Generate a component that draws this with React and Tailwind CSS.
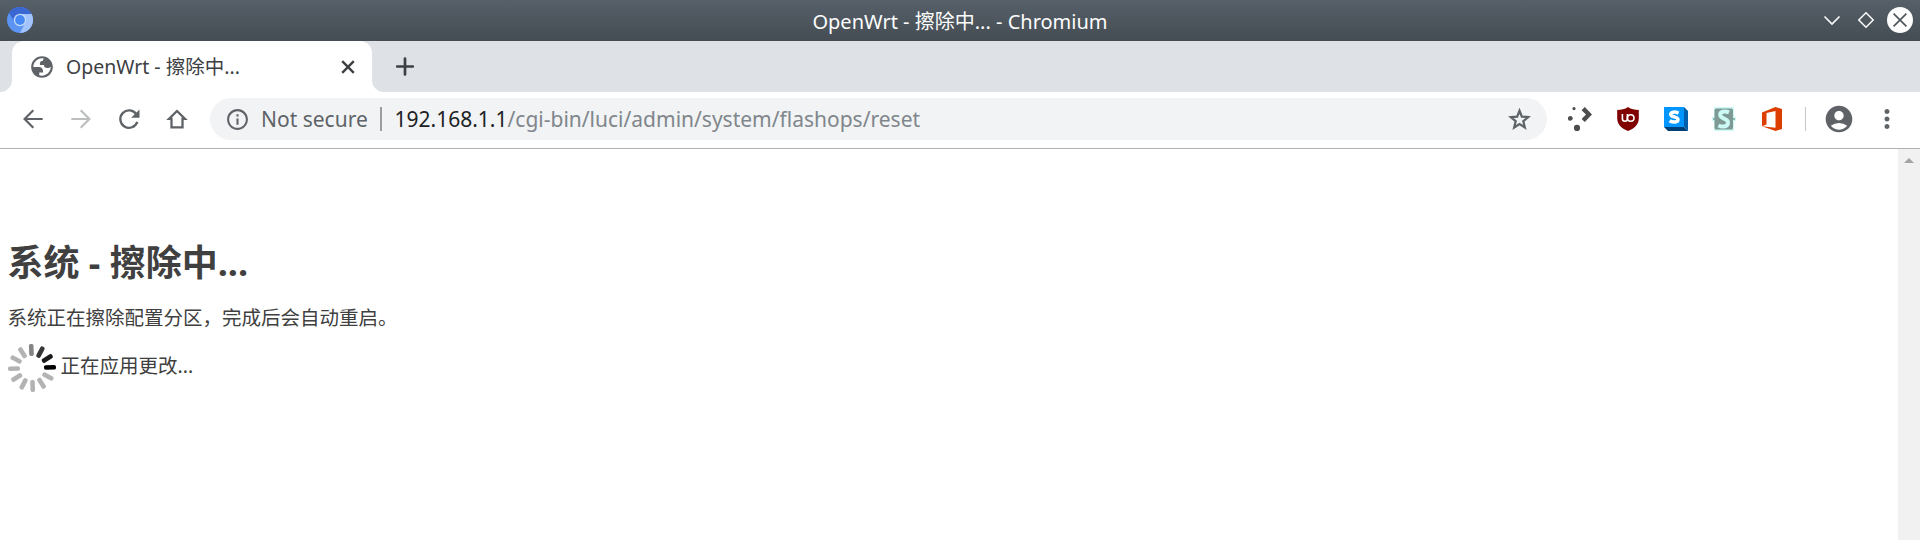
import { MdOutlineInfo, MdAccountCircle, MdMoreVert } from "react-icons/md";

function ChromiumLogo() {
  return (
    <svg className="h-[26px] w-[26px]" viewBox="0 0 26 26">
      <circle cx="13" cy="13" r="13" fill="#5b94f3" />
      <path d="M13 13 L8 15.500 L2 6 A13 13 0 0 1 24.600 7 Z" fill="#3b67d3" />
      <path d="M13 7 H24.600 A13 13 0 0 1 13 26 L18.500 15 Z" fill="#a3c3fb" />
      <circle cx="13" cy="13" r="6.200" fill="#c9dcfc" />
      <circle cx="13" cy="13" r="4.900" fill="#4688f4" />
    </svg>
  );
}

function Globe() {
  return (
    <svg className="h-[26px] w-[26px]" viewBox="0 0 24 24" fill="#5f6368" fillRule="evenodd">
      <path d="M12 2C6.480 2 2 6.480 2 12s4.480 10 10 10 10-4.480 10-10S17.520 2 12 2zM4 12h4.400c3.407.022 4.922 1.730 4.543 5.127H9.488v2.470a8.004 8.004 0 0 0 10.498-8.083C19.327 12.504 18.332 13 17 13c-2.137 0-3.206-.916-3.206-2.750h-3.748c-.274-2.728.683-4.092 2.870-4.092 0-.975.327-1.597.811-1.970A8.004 8.004 0 0 0 4 12z" />
    </svg>
  );
}

const spokes = [
  "#000000", "#b3b3b3", "#b3b3b3", "#b3b3b3", "#b3b3b3", "#b3b3b3",
  "#b3b3b3", "#b3b3b3", "#b3b3b3", "#858585", "#363636", "#1a1a1a",
];

function Spinner() {
  return (
    <svg className="h-12 w-12" viewBox="0 0 48 48">
      {spokes.map((c, i) => (
        <rect key={i} x="36" y="21.700" width="12" height="4.600" rx="1.800" fill={c} transform={`rotate(${i * 30 - 2} 24 24)`} />
      ))}
    </svg>
  );
}

function TitleBar() {
  return (
    <header className="grid h-[41px] grid-cols-[200px_1fr_200px] items-center bg-linear-to-b from-[#566069] to-[#454c53] pb-px">
      <div className="pl-[7px]"><ChromiumLogo /></div>
      <div className="pt-[3px] text-center text-[20px] leading-6 text-[#fcfcfc]">OpenWrt - 擦除中... - Chromium</div>
      <div className="flex items-center justify-end gap-2 pr-[7px]">
        <svg className="h-[26px] w-[26px]" viewBox="0 0 26 26" fill="none" stroke="#fcfcfc" strokeWidth="1.600"><path d="M5.500 9.500 L13 17 L20.500 9.500" /></svg>
        <svg className="h-[26px] w-[26px]" viewBox="0 0 26 26" fill="none" stroke="#fcfcfc" strokeWidth="1.500"><path d="M13 5.800 L20.200 13 L13 20.200 L5.800 13 Z" /></svg>
        <svg className="h-[26px] w-[26px]" viewBox="0 0 26 26" fill="none" stroke="#4b535a" strokeWidth="1.600"><circle cx="13" cy="13" r="13" fill="#fcfcfc" stroke="none" /><path d="M6.600 6.600 L19.400 19.400 M19.400 6.600 L6.600 19.400" /></svg>
      </div>
    </header>
  );
}

function TabStrip() {
  return (
    <div className="flex h-[51px] items-stretch bg-[#dee1e6]">
      <svg className="h-[51px] w-3" viewBox="0 0 12 51"><path d="M0 51 A12 12 0 0 0 12 39 V51 Z" fill="#fff" /></svg>
      <div className="flex w-[360px] items-center rounded-t-[12px] bg-white pl-[17px] pr-3">
        <Globe />
        <span className="ml-[11px] flex-1 whitespace-pre text-[19.5px] leading-6 text-[#3c4043]">OpenWrt - 擦除中...</span>
        <svg className="h-6 w-6" viewBox="0 0 24 24" stroke="#3c4043" strokeWidth="2.400"><path d="M6.200 6.200 L17.800 17.800 M17.800 6.200 L6.200 17.800" /></svg>
      </div>
      <svg className="h-[51px] w-3" viewBox="0 0 12 51"><path d="M12 51 A12 12 0 0 1 0 39 V51 Z" fill="#fff" /></svg>
      <svg className="ml-[9px] mt-[13px] h-6 w-6" viewBox="0 0 24 24" stroke="#3c4043" strokeWidth="2.700" strokeLinecap="round"><path d="M12 4.500 V20.500 M4.200 12.500 H19.800" /></svg>
    </div>
  );
}

function ArrowIcon({ className }) {
  return (
    <svg className={className} viewBox="0 0 24 24" fill="none" stroke="currentColor" strokeWidth="2.200">
      <path d="M21.700 12 H4 M12.300 3.300 L3.600 12 L12.300 20.700" />
    </svg>
  );
}

function ReloadIcon() {
  return (
    <svg className="h-6 w-6" viewBox="0 0 24 24" fill="none" stroke="currentColor" strokeWidth="2.300">
      <path d="M19.500 7.600 A8.700 8.700 0 1 0 20.300 14.800" />
      <path d="M22.500 2.500 V10.800 H14.200 Z" fill="currentColor" stroke="none" />
    </svg>
  );
}

function HomeIcon() {
  return (
    <svg className="h-6 w-6" viewBox="0 0 24 24" fill="none" stroke="currentColor" strokeWidth="2.300">
      <path d="M12 4 L4 11.900 H6.500 V20.400 H17.500 V11.900 H20 Z" />
    </svg>
  );
}

function StarIcon() {
  return (
    <svg className="mr-[14px] h-[27px] w-[27px]" viewBox="0 0 24 24" fill="none" stroke="currentColor" strokeWidth="2">
      <path d="M12 4.200 L14.100 9.400 L19.700 9.850 L15.400 13.500 L16.750 19.100 L12 16.100 L7.250 19.100 L8.600 13.500 L4.300 9.850 L9.900 9.400 Z" />
    </svg>
  );
}

function Extensions() {
  return (
    <>
      <svg className="ml-[21px] h-6 w-6" viewBox="0 0 24 24" fill="#4d4d4d">
        <circle cx="6" cy="1.600" r="1.600" /><circle cx="2.300" cy="11.300" r="2.400" /><circle cx="9" cy="20.900" r="3.100" />
        <path d="M16.800 0 L24 7.500 L16.800 15 L13.600 12 L18 7.500 L13.600 3.200 Z" />
      </svg>
      <svg className="ml-6 h-6 w-6" viewBox="0 0 24 24">
        <path d="M12 0 C9 2.200 5 3 1.200 3 V11 C1.200 18 6 21.500 12 24 C18 21.500 22.800 18 22.800 11 V3 C19 3 15 2.200 12 0 Z" fill="#800000" />
        <path d="M6.400 7 V11.800 A2.500 2.500 0 0 0 11.400 11.800 V7" fill="none" stroke="#fff" strokeWidth="1.600" />
        <circle cx="14.700" cy="11" r="3.300" fill="none" stroke="#fff" strokeWidth="1.600" />
      </svg>
      <svg className="ml-6 h-6 w-6" viewBox="0 0 24 24">
        <path d="M0 20 H20 L24 24 H4 Z" fill="#003f73" /><path d="M20 0 L24 4 V24 L20 20 Z" fill="#005fa8" /><rect width="20" height="20" fill="#0095ff" />
        <path d="M14.600 6.200 C11 4.600 6.700 4.600 6.700 7.400 C6.700 10.600 14 9.200 14 12.500 C14 15.700 9 15.700 5.600 13.700" fill="none" stroke="#fff" strokeWidth="3.500" />
      </svg>
      <svg className="ml-6 h-6 w-6" viewBox="0 0 24 24">
        <path d="M2 0 H22 V10 H24 V14 H22 V24 H2 V14 H0 V10 H2 Z" fill="#ccfaf5" /><rect x="2.500" y="1.500" width="18.500" height="21" rx="1.500" fill="#7f9a95" /><path d="M1 12 H23" stroke="#7f9a95" strokeWidth="1.500" />
        <path d="M17 5.400 C12 3.400 8.200 4.800 8.200 7.700 C8.200 12.200 16 11 16 15.500 C16 19.700 11 20.500 6.400 18.500" fill="none" stroke="#ccfaf5" strokeWidth="4" />
      </svg>
      <svg className="ml-6 h-6 w-6" viewBox="0 0 24 24">
        <path d="M2 5.500 L15.500 0 L22 2 V22 L15.500 24 L2 19.200 L15.500 20.800 V4 L6.500 6 V17.500 L2 19.200 Z" fill="#dc3e00" />
      </svg>
    </>
  );
}

function Toolbar() {
  return (
    <div className="flex h-[57px] items-center border-b border-[#b1b1b3] bg-white pb-0.5 text-[#5f6368]">
      <ArrowIcon className="ml-[21px] h-6 w-6" />
      <ArrowIcon className="ml-6 h-6 w-6 rotate-180 text-[#bdbebf]" />
      <span className="ml-6"><ReloadIcon /></span>
      <span className="ml-6"><HomeIcon /></span>
      <div className="ml-[21px] flex h-[42px] w-[1337px] items-center rounded-full bg-[#f1f3f4] text-[21px]">
        <MdOutlineInfo className="ml-[15px] h-[25px] w-[25px]" />
        <span className="ml-[11px] w-[118.5px] whitespace-nowrap pt-px">Not secure</span>
        <span className="h-6 w-0.5 bg-[#9b9ea1]" />
        <span className="ml-[13px] flex-1 whitespace-nowrap pt-px text-[#80868b]"><span className="text-[#202124]">192.168.1.1</span>/cgi-bin/luci/admin/system/flashops/reset</span>
        <StarIcon />
      </div>
      <Extensions />
      <span className="ml-[21px] h-6 w-px bg-[#c6c8cb]" />
      <MdAccountCircle className="ml-[17px] h-8 w-8" />
      <MdMoreVert className="ml-[17px] h-[30px] w-[30px]" />
    </div>
  );
}

export default function App() {
  return (
    <div className="flex h-[540px] w-[1920px] flex-col overflow-hidden bg-white font-['Noto_Sans','Noto_Sans_CJK_SC',sans-serif]">
      <TitleBar />
      <TabStrip />
      <Toolbar />
      <div className="flex flex-1">
        <main className="flex-1 pl-[7.5px] pt-[87px] text-[#404040]">
          <h2 className="text-[36px] leading-[54px] font-bold">系统 - 擦除中...</h2>
          <p className="mt-[14px] text-[19.5px] leading-[27px]">系统正在擦除配置分区，完成后会自动重启。</p>
          <p className="mt-[13px] flex items-center gap-[5px] text-[19.5px] leading-[27px]"><Spinner /><span className="-mt-1.5">正在应用更改...</span></p>
        </main>
        <aside className="flex w-[22px] justify-center bg-[#f1f1f1] pt-[9px]">
          <svg className="h-[5px] w-[10px]" viewBox="0 0 10 5"><path d="M5 0 L10 5 H0 Z" fill="#a3a3a3" /></svg>
        </aside>
      </div>
    </div>
  );
}
